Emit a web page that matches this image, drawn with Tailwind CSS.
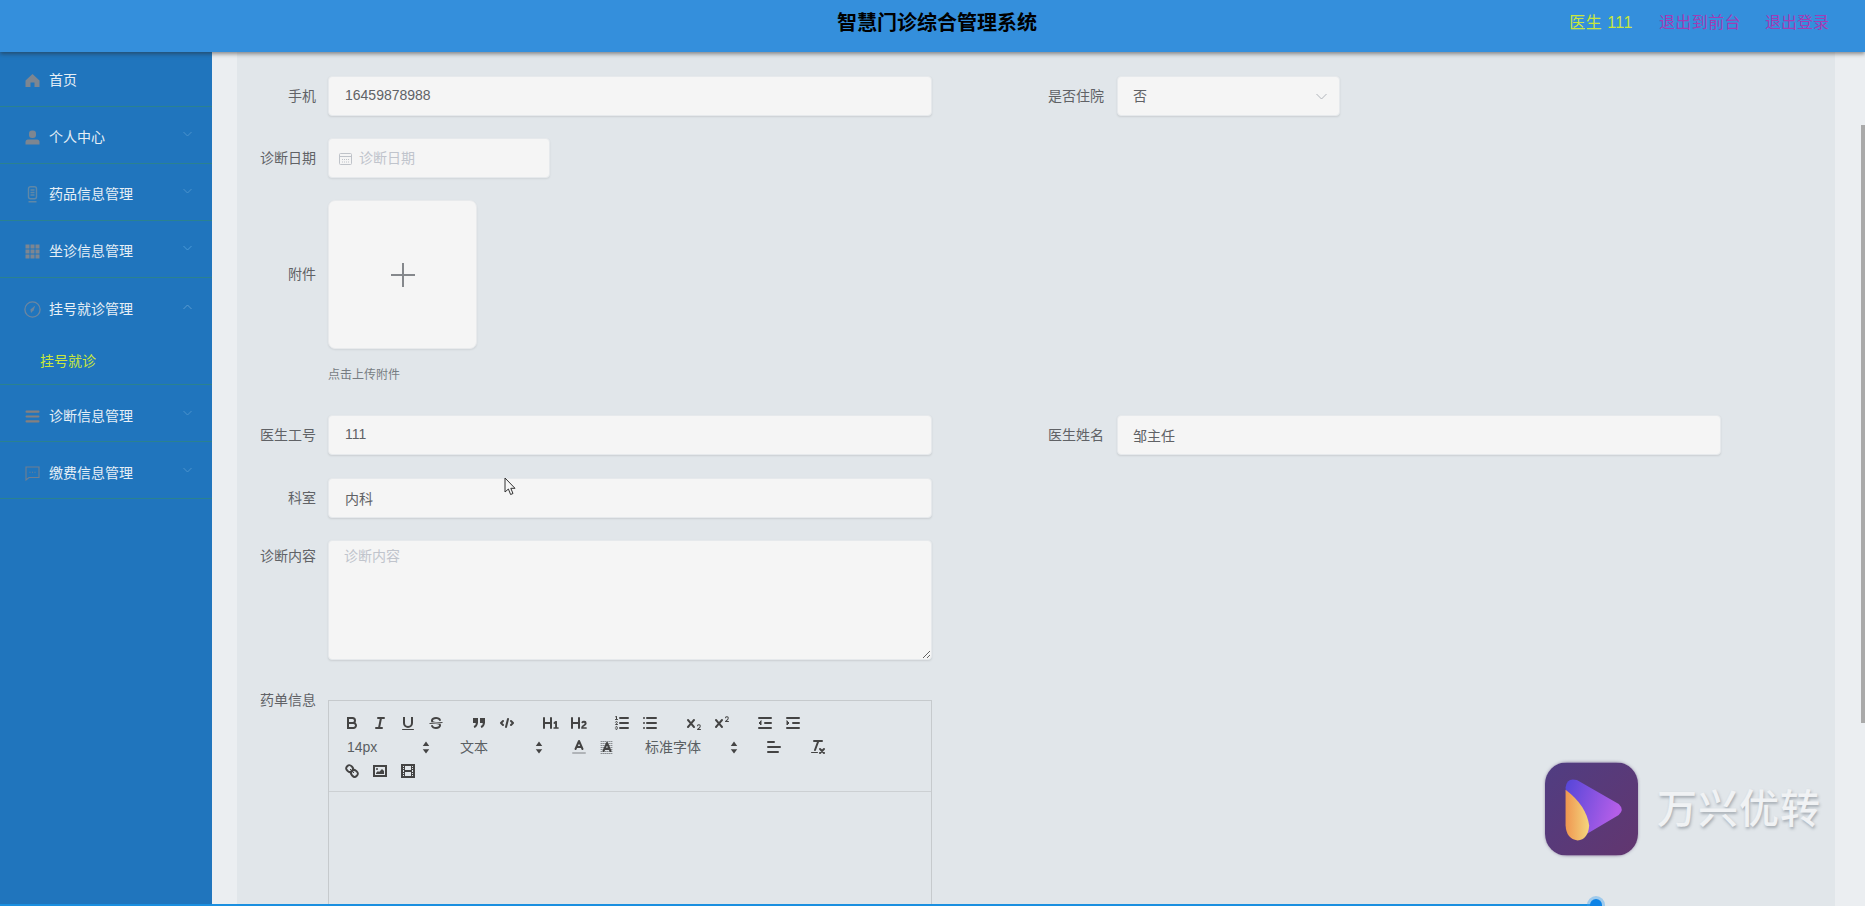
<!DOCTYPE html>
<html lang="zh">
<head>
<meta charset="utf-8">
<title>智慧门诊综合管理系统</title>
<script src="https://cdn.jsdelivr.net/npm/@tailwindcss/browser@4"></script>
</head>
<body class="relative w-[1865px] h-[906px] overflow-hidden flex flex-col bg-[#e1e6ea] [font-family:'Liberation_Sans','Noto_Sans_CJK_SC',sans-serif]">

<header class="relative z-10 h-[52px] shrink-0 flex items-center bg-[#348fdc] shadow-[0_2px_4px_rgba(40,40,40,0.5)] pl-[837px] pr-[36px]">
  <h1 class="text-[20px] leading-[30px] font-bold text-black -mt-[6px]">智慧门诊综合管理系统</h1>
  <div class="ml-auto flex gap-[24px] text-[16px] -mt-[6px]">
    <span class="text-[#c9e63c] mr-[2px] tracking-[0.5px]">医生 111</span>
    <span class="text-[#a23cb5] tracking-[0.4px]">退出到前台</span>
    <span class="text-[#a23cb5]">退出登录</span>
  </div>
</header>

<div class="flex flex-1 min-h-0">
  <aside class="w-[212px] shrink-0 bg-[#2075bd] text-[14px] text-[#e6eff6]">
    <div class="h-[55px] flex items-center border-b border-[#2a8290] pl-[25px] gap-[9px] pt-[2px]">
      <svg class="w-[15px] h-[15px]" viewBox="0 0 15 15" fill="#7d8691"><path d="M7.5 1 0.5 7.5 V14 H5.5 V9.5 H9.5 V14 H14.5 V7.5 Z"/></svg>
      <span>首页</span>
    </div>
    <div class="h-[57px] flex items-center border-b border-[#2a8290] pl-[25px] gap-[9px] pr-[20px] pt-[4px]">
      <svg class="w-[15px] h-[15px]" viewBox="0 0 15 15" fill="#7d8691"><rect x="4" y="0.5" width="7" height="7.5" rx="3"/><path d="M0.5 14.5 V12 Q0.5 9.5 3 9.5 H12 Q14.5 9.5 14.5 12 V14.5 Z"/></svg>
      <span>个人中心</span>
      <svg class="ml-auto w-[9px] h-[6px] -mt-[6px]" viewBox="0 0 9 6" fill="none" stroke="#4a93cc"><path d="M0.5 1 4.5 5 8.5 1"/></svg>
    </div>
    <div class="h-[57px] flex items-center border-b border-[#2a8290] pl-[25px] gap-[9px] pr-[20px] pt-[4px]">
      <svg class="w-[15px] h-[17px]" viewBox="0 0 15 17" fill="none" stroke="#5f88a8" stroke-width="1.4"><rect x="3.5" y="0.7" width="8" height="12" rx="2"/><path d="M5.5 4H9.5M5.5 6.5H9.5M5.5 9H9.5M3.5 15.8H11.5"/></svg>
      <span>药品信息管理</span>
      <svg class="ml-auto w-[9px] h-[6px] -mt-[6px]" viewBox="0 0 9 6" fill="none" stroke="#4a93cc"><path d="M0.5 1 4.5 5 8.5 1"/></svg>
    </div>
    <div class="h-[57px] flex items-center border-b border-[#2a8290] pl-[25px] gap-[9px] pr-[20px] pt-[4px]">
      <svg class="w-[15px] h-[15px]" viewBox="0 0 15 15" fill="#7d8691"><rect x="0.5" y="0.5" width="4" height="4"/><rect x="5.5" y="0.5" width="4" height="4"/><rect x="10.5" y="0.5" width="4" height="4"/><rect x="0.5" y="5.5" width="4" height="4"/><rect x="5.5" y="5.5" width="4" height="4"/><rect x="10.5" y="5.5" width="4" height="4"/><rect x="0.5" y="10.5" width="4" height="4"/><rect x="5.5" y="10.5" width="4" height="4"/><rect x="10.5" y="10.5" width="4" height="4"/></svg>
      <span>坐诊信息管理</span>
      <svg class="ml-auto w-[9px] h-[6px] -mt-[6px]" viewBox="0 0 9 6" fill="none" stroke="#4a9ad6"><path d="M0.5 1 4.5 5 8.5 1"/></svg>
    </div>
    <div class="h-[107px] border-b border-[#2a8290]">
      <div class="h-[57px] flex items-center pl-[25px] gap-[9px] pr-[20px] pt-[6px]">
        <svg class="w-[17px] h-[17px] -ml-[1px] -mr-[1px]" viewBox="0 0 17 17" fill="none" stroke="#6c86a0" stroke-width="1.3"><circle cx="8.5" cy="8.5" r="7.6"/><path d="M11.3 4.6 9.6 9.3 7 12 6.4 8.6Z" fill="#6c86a0" stroke="none"/></svg>
        <span>挂号就诊管理</span>
        <svg class="ml-auto w-[9px] h-[6px] -mt-[6px]" viewBox="0 0 9 6" fill="none" stroke="#5a9cd0"><path d="M0.5 5 4.5 1 8.5 5"/></svg>
      </div>
      <div class="h-[50px] pl-[40px] pt-[4px] leading-[44px] text-[#c9e63c]">挂号就诊</div>
    </div>
    <div class="h-[57px] flex items-center border-b border-[#2a8290] pl-[25px] gap-[9px] pr-[20px] pt-[6px]">
      <svg class="w-[15px] h-[13px]" viewBox="0 0 15 13" fill="#85807f"><rect x="0.5" y="0.5" width="14" height="2.2" rx="1"/><rect x="0.5" y="5.4" width="14" height="2.2" rx="1"/><rect x="0.5" y="10.3" width="14" height="2.2" rx="1"/></svg>
      <span>诊断信息管理</span>
      <svg class="ml-auto w-[9px] h-[6px] -mt-[6px]" viewBox="0 0 9 6" fill="none" stroke="#4a93cc"><path d="M0.5 1 4.5 5 8.5 1"/></svg>
    </div>
    <div class="h-[57px] flex items-center border-b border-[#2a8290] pl-[25px] gap-[9px] pr-[20px] pt-[6px]">
      <svg class="w-[15px] h-[15px]" viewBox="0 0 15 15" fill="none" stroke="#6f7f92" stroke-width="1.1"><path d="M1 1H14V11.5H4L1 14Z"/><path d="M4.5 6.2H5.5M7 6.2H8M9.5 6.2H10.5"/></svg>
      <span>缴费信息管理</span>
      <svg class="ml-auto w-[9px] h-[6px] -mt-[6px]" viewBox="0 0 9 6" fill="none" stroke="#4a93cc"><path d="M0.5 1 4.5 5 8.5 1"/></svg>
    </div>
  </aside>

  <main class="flex-1 min-w-0 flex bg-[#ebeef1]">
    <div class="ml-[25px] w-[1598px] shrink-0 bg-[#e1e6ea] pt-[24px] text-[14px] text-[#606266]">

      <div class="flex h-[40px]">
        <div class="w-[695px] flex items-center">
          <label class="w-[79px] text-right pt-[1px]">手机</label>
          <input readonly value="16459878988" class="ml-[12px] w-[604px] h-[40px] px-[16px] rounded-[4px] bg-[#f5f5f5] border border-[#e6e9ec] shadow-[0_1px_2px_rgba(0,0,0,0.1)] text-[#606266] pb-[3px]">
        </div>
        <div class="flex items-center">
          <label class="w-[172px] text-right pt-[1px]">是否住院</label>
          <div class="ml-[13px] w-[223px] h-[40px] pl-[15px] pr-[12px] flex items-center rounded-[4px] bg-[#f5f5f5] border border-[#e6e9ec] shadow-[0_1px_2px_rgba(0,0,0,0.1)]">
            <span class="pt-[1px]">否</span>
            <svg class="ml-auto w-[11px] h-[7px]" viewBox="0 0 11 7" fill="none" stroke="#b0b4ba"><path d="M0.5 1 5.5 6 10.5 1"/></svg>
          </div>
        </div>
      </div>

      <div class="flex items-center h-[40px] mt-[22px]">
        <label class="w-[79px] text-right pt-[1px]">诊断日期</label>
        <div class="ml-[12px] w-[222px] h-[40px] pl-[10px] flex items-center gap-[7px] rounded-[4px] bg-[#f5f5f5] border border-[#e6e9ec] shadow-[0_1px_2px_rgba(0,0,0,0.08)] text-[#c0c4cc]">
          <svg class="w-[13px] h-[13px]" viewBox="0 0 13 13" fill="none" stroke="#bfc3c9"><rect x="0.5" y="1.5" width="12" height="11" rx="1"/><path d="M0.5 4.5H12.5"/><path d="M3 7.5H10M3 10H10" stroke-dasharray="1 1"/></svg>
          <span class="pt-[1px]">诊断日期</span>
        </div>
      </div>

      <div class="flex items-center h-[149px] mt-[22px]">
        <label class="w-[79px] text-right">附件</label>
        <div class="ml-[12px] w-[149px] h-[149px] flex items-center justify-center rounded-[7px] bg-[#f5f5f5] border border-[#e8eaec] shadow-[0_1px_2px_rgba(0,0,0,0.08)]">
          <svg class="w-[24px] h-[24px]" viewBox="0 0 24 24" stroke="#85888c" stroke-width="2"><path d="M0 12H24M12 0V24"/></svg>
        </div>
      </div>
      <div class="ml-[91px] mt-[17px] text-[12px] leading-[18px] text-[#777d82]">点击上传附件</div>

      <div class="flex h-[40px] mt-[31px]">
        <div class="w-[695px] flex items-center">
          <label class="w-[79px] text-right pt-[1px]">医生工号</label>
          <input readonly value="111" class="ml-[12px] w-[604px] h-[40px] px-[16px] rounded-[4px] bg-[#f5f5f5] border border-[#e6e9ec] shadow-[0_1px_2px_rgba(0,0,0,0.1)] text-[#606266] pb-[3px]">
        </div>
        <div class="flex items-center">
          <label class="w-[172px] text-right pt-[1px]">医生姓名</label>
          <input readonly value="邹主任" class="ml-[13px] w-[604px] h-[40px] px-[15px] rounded-[4px] bg-[#f5f5f5] border border-[#e6e9ec] shadow-[0_1px_2px_rgba(0,0,0,0.1)] text-[#606266]">
        </div>
      </div>

      <div class="flex items-center h-[40px] mt-[23px]">
        <label class="w-[79px] text-right pt-[1px]">科室</label>
        <input readonly value="内科" class="ml-[12px] w-[604px] h-[40px] px-[16px] rounded-[4px] bg-[#f5f5f5] border border-[#e6e9ec] shadow-[0_1px_2px_rgba(0,0,0,0.1)] text-[#606266]">
      </div>

      <div class="flex items-start mt-[22px]">
        <label class="w-[79px] text-right pt-[6px]">诊断内容</label>
        <textarea readonly placeholder="诊断内容" class="block ml-[12px] w-[604px] h-[120px] px-[15px] py-[5px] rounded-[4px] bg-[#f5f5f5] border border-[#e6e9ec] shadow-[0_1px_2px_rgba(0,0,0,0.1)] placeholder:text-[#c0c4cc] resize-y"></textarea>
      </div>

      <div class="flex items-start mt-[40px]">
        <label class="w-[79px] text-right -mt-[10px]">药单信息</label>
        <div class="ml-[12px] w-[604px] h-[300px] border border-[#c6cacd] text-[#5a5f63]">
          <div class="h-[92px] -mt-[1px] pt-[11px] pl-[9px] border-b border-[#ccd0d3]">
            <div class="flex h-[24px]">
              <svg class="w-[28px] h-[24px] px-[5px] py-[3px]" viewBox="0 0 18 18" fill="none" stroke="#444" stroke-width="2"><path d="M5,4H9.5A2.5,2.5,0,0,1,12,6.5v0A2.5,2.5,0,0,1,9.5,9H5A0,0,0,0,1,5,9V4A0,0,0,0,1,5,4Z"/><path d="M5,9h5.5A2.5,2.5,0,0,1,13,11.5v0A2.5,2.5,0,0,1,10.5,14H5a0,0,0,0,1,0,0V9A0,0,0,0,1,5,9Z"/></svg>
              <svg class="w-[28px] h-[24px] px-[5px] py-[3px]" viewBox="0 0 18 18" fill="none" stroke="#444" stroke-width="2" stroke-linecap="round"><path d="M7 4H13M5 14H11M8 14 10 4"/></svg>
              <svg class="w-[28px] h-[24px] px-[5px] py-[3px]" viewBox="0 0 18 18" fill="none" stroke="#444" stroke-width="2"><path d="M5,3V9a4.012,4.012,0,0,0,4,4H9a4.012,4.012,0,0,0,4-4V3"/><rect fill="#444" stroke="none" height="1" rx=".5" width="12" x="3" y="15"/></svg>
              <svg class="w-[28px] h-[24px] px-[5px] py-[3px]" viewBox="0 0 18 18" fill="none"><path stroke="#444" d="M15.5 8.5 2.5 9.5"/><path fill="#444" d="M9.007,8C6.542,7.791,6,7.519,6,6.5,6,5.792,7.283,5,9,5c1.571,0,2.765.679,2.969,1.309a1,1,0,0,0,1.9-.617C13.356,4.106,11.354,3,9,3,6.2,3,4,4.538,4,6.5a3.2,3.2,0,0,0,.5,1.843Z"/><path fill="#444" d="M8.984,10C11.457,10.208,12,10.479,12,11.5c0,.708-1.283,1.5-3,1.5-1.571,0-2.765-.679-2.969-1.309a1,1,0,1,0-1.9.617C4.644,13.894,6.646,15,9,15c2.8,0,5-1.538,5-3.5a3.2,3.2,0,0,0-.5-1.843Z"/></svg>
              <svg class="ml-[15px] w-[28px] h-[24px] px-[5px] py-[3px]" viewBox="0 0 18 18" fill="#444" stroke="#444" stroke-width="2"><rect height="3" width="3" x="4" y="5"/><rect height="3" width="3" x="11" y="5"/><path fill="none" d="M7,8c0,4.031-3,5-3,5"/><path fill="none" d="M14,8c0,4.031-3,5-3,5"/></svg>
              <svg class="w-[28px] h-[24px] px-[5px] py-[3px]" viewBox="0 0 18 18" fill="none" stroke="#444" stroke-width="2" stroke-linecap="round" stroke-linejoin="round"><path d="M5 7 3 9 5 11M13 7 15 9 13 11M10 5 8 13"/></svg>
              <svg class="ml-[16px] w-[28px] h-[24px] px-[5px] py-[3px]" viewBox="0 0 18 18" fill="#444"><path d="M10,4V14a1,1,0,0,1-2,0V10H3v4a1,1,0,0,1-2,0V4A1,1,0,0,1,3,4V8H8V4a1,1,0,0,1,2,0Zm6.06787,9.209H14.98975V7.59863a.54085.54085,0,0,0-.605-.60547h-.62744a1.01119,1.01119,0,0,0-.748.29688L11.645,8.56641a.5435.5435,0,0,0-.022.8584l.28613.30762a.53861.53861,0,0,0,.84717.0332l.09912-.08789a1.2137,1.2137,0,0,0,.2417-.35254h.02246s-.01123.30859-.01123.60547V13.209H12.041a.54085.54085,0,0,0-.605.60547v.43945a.54085.54085,0,0,0,.605.60547h4.02686a.54085.54085,0,0,0,.605-.60547v-.43945A.54085.54085,0,0,0,16.06787,13.209Z"/></svg>
              <svg class="w-[28px] h-[24px] px-[5px] py-[3px]" viewBox="0 0 18 18" fill="#444"><path d="M16.73975,13.81445v.43945a.54085.54085,0,0,1-.605.60547H11.855a.58392.58392,0,0,1-.64893-.60547V14.0127c0-2.90527,3.39941-3.42187,3.39941-4.55469a.77675.77675,0,0,0-.84717-.78125,1.17684,1.17684,0,0,0-.83594.38477c-.2749.26367-.561.374-.85791.13184l-.4292-.34082c-.30811-.24219-.38525-.51758-.1543-.81445a2.97155,2.97155,0,0,1,2.45361-1.17676,2.45393,2.45393,0,0,1,2.68408,2.40918c0,2.45312-3.1792,2.92676-3.27832,3.93848h2.79443A.54085.54085,0,0,1,16.73975,13.81445ZM9,3A.99974.99974,0,0,0,8,4V8H3V4A1,1,0,0,0,1,4V14a1,1,0,0,0,2,0V10H8v4a1,1,0,0,0,2,0V4A.99974.99974,0,0,0,9,3Z"/></svg>
              <svg class="ml-[15px] w-[28px] h-[24px] px-[5px] py-[3px]" viewBox="0 0 18 18" fill="none" stroke="#444" stroke-linecap="round"><path stroke-width="2" d="M7 4H15M7 9H15M7 14H15"/><path d="M2.5 5.5H4.5M4.5 10.5h-2c0-.234,1.85-1.076,1.85-2.234A0.959,0.959,0,0,0,2.5,8.156M2.5,14.846a0.959,0.959,0,0,0,1.85-.109A0.7,0.7,0,0,0,3.75,14a0.688,0.688,0,0,0,.6-0.736,0.959,0.959,0,0,0-1.85-.109"/><path fill="#444" stroke="none" d="M3.5,6A0.5,0.5,0,0,1,3,5.5V3.085l-0.276.138A0.5,0.5,0,0,1,2.053,3c-0.124-.247-0.023-0.324.224-0.447l1-.5A0.5,0.5,0,0,1,4,2.5v3A0.5,0.5,0,0,1,3.5,6Z"/></svg>
              <svg class="w-[28px] h-[24px] px-[5px] py-[3px]" viewBox="0 0 18 18" fill="none" stroke="#444" stroke-width="2" stroke-linecap="round"><path d="M6 4H15M6 9H15M6 14H15M3 4H3M3 9H3M3 14H3"/></svg>
              <svg class="ml-[16px] w-[28px] h-[24px] px-[5px] py-[3px]" viewBox="0 0 18 18" fill="#444"><path d="M15.5,15H13.861a3.858,3.858,0,0,0,1.914-2.975,1.8,1.8,0,0,0-1.6-1.751A1.921,1.921,0,0,0,12.021,11.7a0.50013,0.50013,0,1,0,.957.291h0a0.914,0.914,0,0,1,1.053-.725,0.81,0.81,0,0,1,.744.762c0,1.076-1.16971,1.86982-1.93971,2.43082A1.45639,1.45639,0,0,0,12,15.5a0.5,0.5,0,0,0,.5.5h3A0.5,0.5,0,0,0,15.5,15Z"/><path d="M9.65,5.241a1,1,0,0,0-1.409.108L6,7.964,3.759,5.349A1,1,0,0,0,2.192,6.59178Q2.21541,6.6213,2.241,6.649L4.684,9.5,2.241,12.35A1,1,0,0,0,3.71,13.70722q0.02557-.02768.049-0.05722L6,11.036,8.241,13.65a1,1,0,1,0,1.567-1.24277Q9.78459,12.3777,9.759,12.35L7.316,9.5,9.759,6.651A1,1,0,0,0,9.65,5.241Z"/></svg>
              <svg class="w-[28px] h-[24px] px-[5px] py-[3px]" viewBox="0 0 18 18" fill="#444"><path d="M15.5,7H13.861a4.015,4.015,0,0,0,1.914-2.975,1.8,1.8,0,0,0-1.6-1.751A1.922,1.922,0,0,0,12.021,3.7a0.5,0.5,0,1,0,.957.291,0.917,0.917,0,0,1,1.053-.725,0.81,0.81,0,0,1,.744.762c0,1.077-1.164,1.925-1.934,2.486A1.423,1.423,0,0,0,12,7.5a0.5,0.5,0,0,0,.5.5h3A0.5,0.5,0,0,0,15.5,7Z"/><path d="M9.651,5.241a1,1,0,0,0-1.41.108L6,7.964,3.759,5.349a1,1,0,1,0-1.519,1.3L4.683,9.5,2.241,12.35a1,1,0,1,0,1.519,1.3L6,11.036,8.241,13.65a1,1,0,0,0,1.519-1.3L7.317,9.5,9.759,6.651A1,1,0,0,0,9.651,5.241Z"/></svg>
              <svg class="ml-[15px] w-[28px] h-[24px] px-[5px] py-[3px]" viewBox="0 0 18 18" fill="none" stroke="#444" stroke-width="2" stroke-linecap="round"><path d="M3 14H15M3 4H15M9 9H15"/><path fill="#444" stroke-width="1" stroke-linejoin="round" d="M5 7 5 11 3 9 5 7"/></svg>
              <svg class="w-[28px] h-[24px] px-[5px] py-[3px]" viewBox="0 0 18 18" fill="none" stroke="#444" stroke-width="2" stroke-linecap="round"><path d="M3 14H15M3 4H15M9 9H15"/><path fill="#444" stroke-width="1" stroke-linejoin="round" d="M3 7 3 11 5 9 3 7"/></svg>
            </div>
            <div class="flex h-[24px] items-center text-[14px]">
              <div class="w-[98px] pl-[9px] pr-[6px] flex items-center">
                <span>14px</span>
                <svg class="ml-auto w-[8px] h-[13px]" viewBox="0 0 7 12" fill="#444"><path d="M3.5 0.5 6.5 4.5H0.5ZM3.5 11.5 0.5 7.5H6.5Z"/></svg>
              </div>
              <div class="ml-[15px] w-[100px] pl-[9px] pr-[8px] flex items-center">
                <span>文本</span>
                <svg class="ml-auto w-[8px] h-[13px]" viewBox="0 0 7 12" fill="#444"><path d="M3.5 0.5 6.5 4.5H0.5ZM3.5 11.5 0.5 7.5H6.5Z"/></svg>
              </div>
              <svg class="ml-[14px] w-[28px] h-[24px] px-[5px] py-[3px]" viewBox="0 0 18 18" fill="none" stroke="#444" stroke-width="2" stroke-linecap="round" stroke-linejoin="round"><path stroke="#b0b4b8" d="M3 15H15"/><path d="M5.5 11 9 3 12.5 11M11.63 9H6.38"/></svg>
              <svg class="w-[28px] h-[24px] px-[5px] py-[3px]" viewBox="0 0 18 18" fill="none" stroke="#444" stroke-width="2" stroke-linecap="round" stroke-linejoin="round"><path stroke="#8a8e92" stroke-width="1" stroke-dasharray="1 1" d="M3 3.5H15M3 5.5H15M3 7.5H15M3 9.5H15M3 11.5H15M3 13.5H15M3 15.5H15"/><path d="M5.5 13 9 5 12.5 13M11.63 11H6.38"/></svg>
              <div class="ml-[15px] w-[110px] pl-[9px] pr-[8px] flex items-center">
                <span>标准字体</span>
                <svg class="ml-auto w-[8px] h-[13px]" viewBox="0 0 7 12" fill="#444"><path d="M3.5 0.5 6.5 4.5H0.5ZM3.5 11.5 0.5 7.5H6.5Z"/></svg>
              </div>
              <svg class="ml-[14px] w-[28px] h-[24px] px-[5px] py-[3px]" viewBox="0 0 18 18" fill="none" stroke="#444" stroke-width="2" stroke-linecap="round"><path d="M3 9H15M3 14H13M3 4H9"/></svg>
              <svg class="ml-[16px] w-[28px] h-[24px] px-[5px] py-[3px]" viewBox="0 0 18 18" fill="none" stroke="#444" stroke-width="2" stroke-linecap="round"><path d="M5 3H13M6 12 9.35 3M11 11 15 15M15 11 11 15"/><rect fill="#444" stroke="none" height="1" rx=".5" width="7" x="2" y="14"/></svg>
            </div>
            <div class="flex h-[24px]">
              <svg class="w-[28px] h-[24px] px-[5px] py-[3px]" viewBox="0 0 18 18" fill="none" stroke="#444" stroke-width="2"><path stroke-width="1" d="M7 7 11 11"/><path d="M8.9,4.577a3.476,3.476,0,0,1,.36,4.679A3.476,3.476,0,0,1,4.577,8.9C3.185,7.5,2.035,6.4,4.217,4.217S7.5,3.185,8.9,4.577Z"/><path d="M13.423,9.1a3.476,3.476,0,0,0-4.679-.36,3.476,3.476,0,0,0,.36,4.679c1.392,1.392,2.5,2.542,4.679.36S14.815,10.5,13.423,9.1Z"/></svg>
              <svg class="w-[28px] h-[24px] px-[5px] py-[3px]" viewBox="0 0 18 18" fill="none" stroke="#444" stroke-width="2"><rect height="10" width="12" x="3" y="4"/><circle fill="#444" stroke="none" cx="6" cy="7" r="1"/><path fill="#444" stroke="none" d="M5 12V11L7 9 8 10 11 7 13 9V12Z"/></svg>
              <svg class="w-[28px] h-[24px] px-[5px] py-[3px]" viewBox="0 0 18 18" fill="none" stroke="#444" stroke-width="2"><rect height="12" width="12" x="3" y="3"/><g fill="#444" stroke="none"><rect height="12" width="1" x="5" y="3"/><rect height="12" width="1" x="12" y="3"/><rect height="2" width="8" x="5" y="8"/><rect height="1" width="3" x="3" y="5"/><rect height="1" width="3" x="3" y="7"/><rect height="1" width="3" x="3" y="10"/><rect height="1" width="3" x="3" y="12"/><rect height="1" width="3" x="12" y="5"/><rect height="1" width="3" x="12" y="7"/><rect height="1" width="3" x="12" y="10"/><rect height="1" width="3" x="12" y="12"/></g></svg>
            </div>
          </div>
        </div>
      </div>
    </div>

    <div class="flex-1 flex justify-end pt-[73px]">
      <div class="w-[4px] h-[598px] bg-[#a9a9a9]"></div>
    </div>
  </main>
</div>

<svg class="absolute left-[504px] top-[477px] w-[12px] h-[19px] z-20" viewBox="0 0 12 19" fill="#f5f5f5" stroke="#333" stroke-width="1"><path d="M1 1V15L4.4 12 6.6 17.5 9 16.5 6.8 11.3H11Z"/></svg>

<div class="absolute left-[1545px] top-[762px] z-20 flex items-center gap-[19px]">
  <svg class="w-[93px] h-[94px] rounded-[22px] shadow-[0_0_3px_rgba(80,60,110,0.5)]" viewBox="0 0 280 280">
    <defs>
      <linearGradient id="bg" x1="0" y1="0" x2="1" y2="1"><stop offset="0" stop-color="#503d82"/><stop offset="1" stop-color="#62366f"/></linearGradient>
      <linearGradient id="tri" x1="0" y1="0" x2="1" y2="0.3"><stop offset="0" stop-color="#5446d8"/><stop offset="1" stop-color="#b45ee8"/></linearGradient>
      <linearGradient id="leaf" x1="0" y1="0" x2="1" y2="0"><stop offset="0" stop-color="#ef9650"/><stop offset="1" stop-color="#f4d67e"/></linearGradient>
    </defs>
    <rect width="280" height="280" fill="url(#bg)"/>
    <path d="M62 75Q66 44 96 53L222 125Q240 142 222 158L128 214Q62 130 62 75Z" fill="url(#tri)"/>
    <path d="M62 82Q125 130 133 190Q130 232 98 235Q64 230 62 190Z" fill="url(#leaf)"/>
  </svg>
  <span class="text-[40px] leading-[48px] font-medium tracking-[1px] text-[#f0f2f4] [text-shadow:1px_2px_3px_rgba(90,100,110,0.45)]">万兴优转</span>
</div>

<div class="absolute left-0 bottom-0 z-20 w-[1596px] h-[2px] bg-[#1a8fe0]"></div>
<div class="absolute left-[1590px] top-[899px] z-20 w-[12px] h-[7px] rounded-t-full bg-[#0d83e6] shadow-[0_0_0_3px_rgba(60,160,240,0.4)]"></div>

</body>
</html>
